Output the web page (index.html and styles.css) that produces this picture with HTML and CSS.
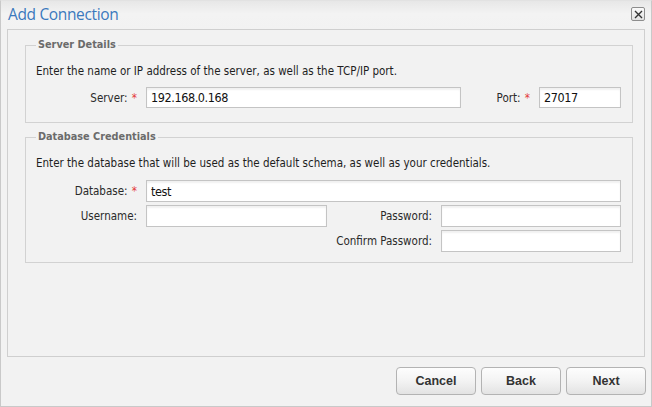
FILE: index.html
```html
<!DOCTYPE html>
<html lang="en">
<head>
<meta charset="utf-8">
<title>Add Connection</title>
<link rel="stylesheet" href="styles.css">
</head>
<body>
<div class="window">
  <div class="titlebar">
    <span class="title">Add Connection</span>
    <button class="close" aria-label="Close">
      <svg width="9" height="9" viewBox="0 0 9 9"><path d="M1 1 L8 8 M8 1 L1 8" stroke="#333" stroke-width="1.4" fill="none"/></svg>
    </button>
  </div>
  <div class="panel">
    <fieldset class="group server">
      <legend>Server Details</legend>
      <p class="desc">Enter the name or IP address of the server, as well as the TCP/IP port.</p>
      <div class="server-row">
        <label class="lbl">Server: <span class="req">*</span></label>
        <input class="field" type="text" value="192.168.0.168">
        <label class="lbl">Port: <span class="req">*</span></label>
        <input class="field" type="text" value="27017">
      </div>
    </fieldset>
    <fieldset class="group creds">
      <legend>Database Credentials</legend>
      <p class="desc">Enter the database that will be used as the default schema, as well as your credentials.</p>
      <div class="cred-grid">
        <label class="lbl">Database: <span class="req">*</span></label>
        <input class="field wide" type="text" value="test">
        <label class="lbl">Username:</label>
        <input class="field" type="text" value="">
        <label class="lbl">Password:</label>
        <input class="field" type="password" value="">
        <label class="lbl col3">Confirm Password:</label>
        <input class="field" type="password" value="">
      </div>
    </fieldset>
  </div>
  <div class="footer">
    <button class="btn">Cancel</button>
    <button class="btn">Back</button>
    <button class="btn">Next</button>
  </div>
</div>
</body>
</html>
```

FILE: styles.css
```css
* { box-sizing: border-box; }
html, body { margin: 0; padding: 0; }
body {
  width: 652px;
  height: 407px;
  overflow: hidden;
  background: #f2f2f2;
  font-family: "DejaVu Sans Condensed", "DejaVu Sans", sans-serif;
  font-size: 11.5px;
  color: #222;
}
.window {
  width: 652px;
  height: 407px;
  display: flex;
  flex-direction: column;
  border: 1px solid #c9c9c9;
  border-top-color: #e2e2e2;
  background: #f2f2f2;
}
.titlebar {
  height: 28px;
  flex: none;
  display: flex;
  align-items: center;
  justify-content: space-between;
  padding: 0 6px 0 7px;
  background: linear-gradient(#e7e7e7, #f3f3f3 45%, #f2f2f2);
}
.title {
  font-family: "Open Sans", sans-serif;
  font-weight: 400;
  font-size: 15.5px;
  color: #3b79bd;
  letter-spacing: -0.35px;
  margin-top: -2px;
}
.close {
  width: 14px;
  height: 14px;
  padding: 0;
  margin: 0 0 2px 0;
  border: 1px solid #8d8d8d;
  border-radius: 2px;
  background: linear-gradient(#fafafa, #e2e2e2);
  display: flex;
  align-items: center;
  justify-content: center;
}
.panel {
  flex: none;
  height: 328px;
  margin: 0 6px;
  border: 1px solid #cfcfcf;
  background: #f2f2f2;
  padding: 8px 11px 0 17px;
}
.group {
  margin: 0;
  border: 1px solid #d2d2d2;
  padding: 0 11px 0 10px;
  min-width: 0;
}
.group legend {
  padding: 0 2px;
  font-family: "DejaVu Sans Condensed", "DejaVu Sans", sans-serif;
  font-weight: bold;
  font-size: 10.8px;
  line-height: 14px;
  color: #6b6b6b;
}
.server { padding-bottom: 14px; }
.creds { margin-top: 7px; padding-bottom: 10px; }
.desc {
  margin: 12px 0 9px;
  line-height: 14px;
  color: #1e1e1e;
}
.creds .desc { margin-bottom: 10px; }
.server-row {
  display: grid;
  grid-template-columns: 101px 315px 1fr 82px;
  column-gap: 9px;
  align-items: center;
}
.cred-grid {
  display: grid;
  grid-template-columns: 101px 181px 1fr 180px;
  column-gap: 9px;
  row-gap: 3px;
  align-items: center;
}
.cred-grid .wide { grid-column: 2 / 5; }
.cred-grid .col3 { grid-column: 3; }
.lbl {
  text-align: right;
  color: #2a2a2a;
  white-space: nowrap;
}
.req { color: #e43b3b; margin-left: 1px; }
.field {
  height: 22px;
  width: 100%;
  margin: 0;
  border: 1px solid #c4c4c4;
  background: #fff;
  box-shadow: inset 0 2px 2px rgba(0, 0, 0, 0.06);
  padding: 0 4px;
  font-family: "DejaVu Sans Condensed", "DejaVu Sans", sans-serif;
  font-size: 12.5px;
  letter-spacing: -0.4px;
  color: #111;
  outline: none;
}
.server-row .field { height: 21px; }
.footer {
  flex: 1;
  display: flex;
  justify-content: flex-end;
  align-items: flex-start;
  gap: 5px;
  padding: 10px 5px 0 0;
}
.btn {
  width: 80px;
  height: 28px;
  border: 1px solid #b3b3b3;
  border-radius: 4px;
  background: linear-gradient(#fdfdfd, #f3f3f3 50%, #e3e3e3);
  font-family: "Liberation Sans", Arial, sans-serif;
  font-weight: bold;
  font-size: 12.5px;
  color: #333;
  padding: 0;
}
```
